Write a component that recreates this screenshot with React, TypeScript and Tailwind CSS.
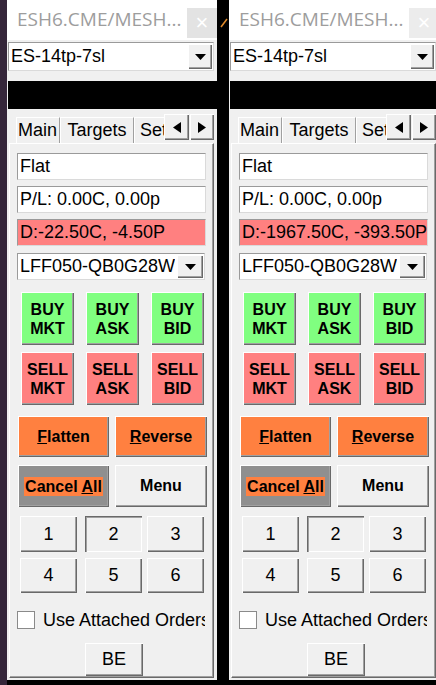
import type { ReactNode } from 'react'

// classic win32 bevels
const raised =
  'shadow-[inset_1px_1px_0_#ffffff,inset_-1px_-1px_0_#696969,inset_-2px_-2px_0_#a0a0a0]'
const pressed =
  'shadow-[inset_1px_1px_0_#696969,inset_2px_2px_0_#a0a0a0,inset_-1px_-1px_0_#ffffff]'
const sunken = 'border border-[#9a9a9a] border-r-[#dadada] border-b-[#dadada]'

function DownArrow() {
  return (
    <svg width="11" height="6" viewBox="0 0 11 6">
      <polygon points="0,0 11,0 5.5,6" fill="#000" />
    </svg>
  )
}

function ComboButton({ className }: { className: string }) {
  return (
    <div
      className={`flex shrink-0 items-center justify-center bg-[#f0f0f0] ${raised} ${className}`}
    >
      <DownArrow />
    </div>
  )
}

function Btn({
  children,
  className,
  down = false,
}: {
  children: ReactNode
  className: string
  down?: boolean
}) {
  return (
    <div
      className={`flex shrink-0 items-center justify-center text-center ${down ? pressed : raised} ${className}`}
    >
      {children}
    </div>
  )
}

function Field({ children, className }: { children: ReactNode; className: string }) {
  return (
    <div
      className={`ml-[7px] flex h-[27px] w-[189px] items-center overflow-hidden whitespace-nowrap pl-[2px] text-[18px] ${sunken} ${className}`}
    >
      {children}
    </div>
  )
}

function Panel({ delta, closeBg }: { delta: string; closeBg: string }) {
  return (
    <div className="flex h-[680px] w-[210px] shrink-0 flex-col bg-[#f0f0f0]">
      {/* window caption */}
      <div className="flex h-[40px] shrink-0 bg-white">
        <span className="mt-[5px] ml-[10px] font-['Open_Sans',sans-serif] text-[19px] leading-[28px] text-[#9d9d9d]">
          ESH6.CME/MESH...
        </span>
        <div
          className={`mt-[8px] ml-auto flex h-[30px] w-[30px] items-center justify-center text-[22px] leading-none text-white ${closeBg}`}
        >
          ×
        </div>
      </div>

      {/* strategy picker */}
      <div
        className={`mt-[2px] ml-[1px] flex h-[29px] w-[206px] items-center bg-white ${sunken}`}
      >
        <span className="pl-[2px] text-[18px]">ES-14tp-7sl</span>
        <ComboButton className="mr-[1px] ml-auto h-[25px] w-[24px]" />
      </div>

      <div className="mt-[10px] ml-[1px] h-[28px] shrink-0 bg-black" />

      {/* tab strip */}
      <div className="mt-[5px] flex h-[29px] shrink-0 items-start pl-[9px] text-[18px]">
        <div className="mt-[3px] flex h-[26px] w-[44px] items-center border-t border-l border-white border-r border-r-[#a0a0a0] pl-[1px]">
          Main
        </div>
        <div className="mt-[3px] flex h-[26px] w-[74px] items-center justify-center border-t border-l border-white border-r border-r-[#a0a0a0]">
          Targets
        </div>
        <div className="mt-[3px] flex h-[26px] w-[30px] items-center overflow-hidden border-t border-l border-white pl-[5px]">
          Settings
        </div>
        <Btn className="h-[26px] w-[25px] bg-[#f0f0f0]">
          <svg width="8" height="11" viewBox="0 0 8 11">
            <polygon points="8,0 8,11 0,5.5" fill="#000" />
          </svg>
        </Btn>
        <Btn className="ml-[1px] h-[26px] w-[24px] bg-[#f0f0f0]">
          <svg width="8" height="11" viewBox="0 0 8 11">
            <polygon points="0,0 0,11 8,5.5" fill="#000" />
          </svg>
        </Btn>
      </div>

      {/* tab page */}
      <div className="mb-[2px] ml-[2px] flex w-[205px] flex-1 flex-col border border-white border-r-[#696969] border-b-[#696969] shadow-[inset_-1px_-1px_0_#a0a0a0]">
        <Field className="mt-[9px] bg-white">Flat</Field>
        <Field className="mt-[6px] bg-white">P/L: 0.00C, 0.00p</Field>
        <Field className="mt-[6px] bg-[#ff8080]">{delta}</Field>

        <div
          className={`mt-[7px] ml-[7px] flex h-[27px] w-[188px] items-center overflow-hidden bg-white ${sunken}`}
        >
          <span className="overflow-hidden pl-[2px] text-[18px] whitespace-nowrap">
            LFF050-QB0G28W
          </span>
          <ComboButton className="mr-[1px] ml-auto h-[23px] w-[26px]" />
        </div>

        <div className="mt-[12px] flex gap-[12px] pl-[11px] text-[16px] leading-[19px] font-bold">
          <Btn className="h-[53px] w-[53px] bg-[#80ff80]">BUY<br />MKT</Btn>
          <Btn className="h-[53px] w-[53px] bg-[#80ff80]">BUY<br />ASK</Btn>
          <Btn className="h-[53px] w-[53px] bg-[#80ff80]">BUY<br />BID</Btn>
        </div>
        <div className="mt-[7px] flex gap-[12px] pl-[11px] text-[16px] leading-[19px] font-bold">
          <Btn className="h-[53px] w-[53px] bg-[#ff8080]">SELL<br />MKT</Btn>
          <Btn className="h-[53px] w-[53px] bg-[#ff8080]">SELL<br />ASK</Btn>
          <Btn className="h-[53px] w-[53px] bg-[#ff8080]">SELL<br />BID</Btn>
        </div>

        <div className="mt-[11px] flex gap-[6px] pl-[8px] text-[16px] font-bold">
          <Btn className="h-[41px] w-[91px] bg-[#ff8040]">
            <span><span className="underline">F</span>latten</span>
          </Btn>
          <Btn className="h-[41px] w-[92px] bg-[#ff8040]">
            <span><span className="underline">R</span>everse</span>
          </Btn>
        </div>
        <div className="mt-[8px] flex gap-[6px] pl-[8px] text-[16px] font-bold">
          <Btn className="h-[42px] w-[91px] bg-[#8f8f8f]">
            <span className="bg-[#ff8040] px-[1px] leading-[19px]">
              Cancel <span className="underline">A</span>ll
            </span>
          </Btn>
          <Btn className="h-[42px] w-[92px] bg-[#f0f0f0]">Menu</Btn>
        </div>

        <div className="mt-[9px] flex pl-[10px] text-[18px]">
          <Btn className="h-[36px] w-[57px] bg-[#f0f0f0]">1</Btn>
          <Btn down className="ml-[8px] h-[36px] w-[57px] bg-[#f0f0f0]">2</Btn>
          <Btn className="ml-[5px] h-[36px] w-[57px] bg-[#f0f0f0]">3</Btn>
        </div>
        <div className="mt-[6px] flex pl-[10px] text-[18px]">
          <Btn className="h-[35px] w-[57px] bg-[#f0f0f0]">4</Btn>
          <Btn className="ml-[8px] h-[35px] w-[57px] bg-[#f0f0f0]">5</Btn>
          <Btn className="ml-[5px] h-[35px] w-[57px] bg-[#f0f0f0]">6</Btn>
        </div>

        <label className="mt-[18px] flex h-[18px] items-center pl-[7px] text-[18px] leading-[18px]">
          <span className="h-[18px] w-[18px] shrink-0 border border-[#8a8a8a] bg-white" />
          <span className="ml-[8px] w-[162px] overflow-hidden whitespace-nowrap">
            Use Attached Orders
          </span>
        </label>

        <Btn className="mt-[14px] ml-[75px] h-[33px] w-[58px] bg-[#f0f0f0] text-[18px]">
          BE
        </Btn>
      </div>
    </div>
  )
}

export default function App() {
  return (
    <div className="flex h-[685px] w-[436px] overflow-hidden bg-black font-['Liberation_Sans',Arial,sans-serif] text-black">
      <div className="w-[7px] shrink-0 bg-[#35263a]" />
      <Panel delta="D:-22.50C, -4.50P" closeBg="bg-[#e3e3e3]" />
      <div className="w-[12px] shrink-0 pt-[18px] pl-[3px]">
        <svg width="8" height="10" viewBox="0 0 8 10">
          <path d="M1 9 L7 1" stroke="#e08a2a" strokeWidth="1.5" />
        </svg>
      </div>
      <Panel delta="D:-1967.50C, -393.50P" closeBg="bg-[#ececec]" />
    </div>
  )
}
